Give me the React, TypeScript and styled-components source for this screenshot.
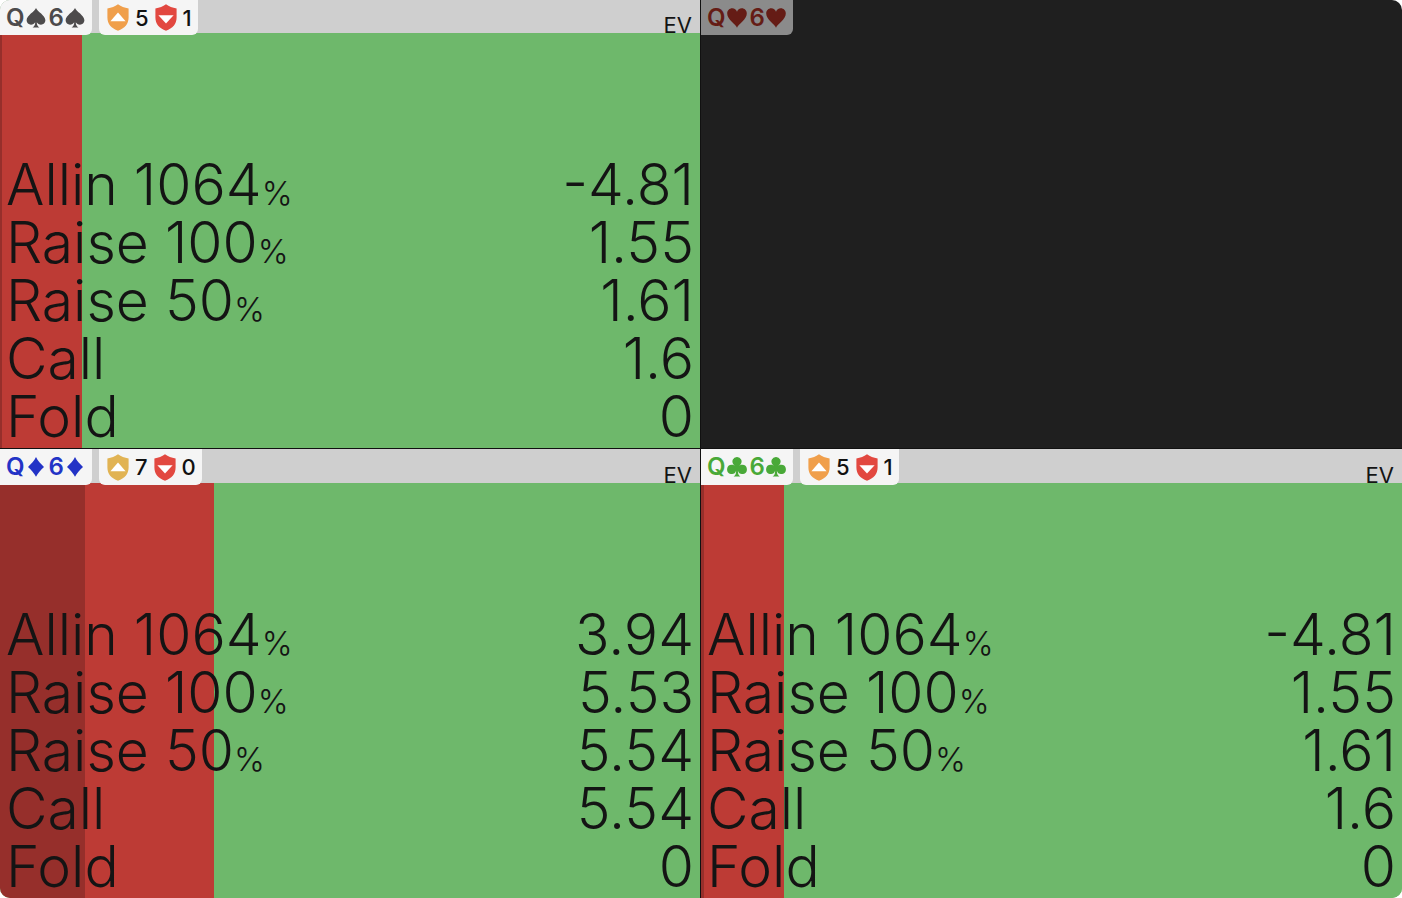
import React from "react";
import styled, { createGlobalStyle, css } from "styled-components";

type Suit = "spade" | "heart" | "diamond" | "club";
type Level = "orange" | "gold";

interface Action {
  name: string;
  percent?: boolean;
  ev: string;
}

interface Combo {
  suit: Suit;
  color: string;
  better?: { count: number; level: Level };
  worse?: number;
  allin?: number;
  raise?: number;
  actions?: Action[];
}

const GlobalStyle = createGlobalStyle`
  * { box-sizing: border-box; }
  body {
    margin: 0;
    background: #ffffff;
    color: #141414;
    font-family: Inter, "Liberation Sans", sans-serif;
  }
`;

const Board = styled.main`
  display: grid;
  grid-template-columns: 1fr 1fr;
  grid-template-rows: 1fr 1fr;
  min-height: 100vh;
  overflow: hidden;
  border-radius: 10px;
`;

const Pane = styled.section<{ $top: boolean; $left: boolean; $empty: boolean }>`
  display: flex;
  flex-direction: column;
  min-width: 0;
  background: ${(p) => (p.$empty ? "#1f1f1f" : "#6eb86b")};
  border-right: ${(p) => (p.$left ? "1px solid #111111" : "0")};
  border-bottom: ${(p) => (p.$top ? "1px solid #111111" : "0")};
`;

const Header = styled.header<{ $top: boolean; $empty: boolean }>`
  display: flex;
  align-items: flex-start;
  gap: 7px;
  height: ${(p) => (p.$top ? 33 : 34)}px;
  padding-right: 8px;
  background: ${(p) => (p.$empty ? "transparent" : "#cfcfcf")};
`;

const chip = css<{ $top: boolean }>`
  position: relative;
  z-index: 1;
  display: flex;
  align-items: center;
  height: ${(p) => (p.$top ? 35 : 36)}px;
  background: #f5f5f5;
`;

const Hand = styled.h2<{ $top: boolean; $color: string; $empty: boolean }>`
  ${chip}
  gap: 1px;
  margin: 0;
  padding: 0 5px 0 6px;
  border-radius: 0 0 6px 0;
  color: ${(p) => p.$color};
  background: ${(p) => (p.$empty ? "#8b8b8b" : "#f5f5f5")};
  font-size: 24px;
  font-weight: 600;
  line-height: 34px;
`;

const Counts = styled.div<{ $top: boolean }>`
  ${chip}
  gap: 6px;
  padding: 0 6px 0 8px;
  border-radius: 0 0 6px 6px;
  color: #111111;
  font-size: 22px;
  font-weight: 500;
  line-height: 34px;
`;

const EvLabel = styled.span`
  align-self: flex-end;
  margin-left: auto;
  font-size: 22px;
  font-weight: 400;
  line-height: 16px;
`;

const Strategy = styled.div<{ $allin: number; $raise: number }>`
  flex: 1;
  display: flex;
  flex-direction: column;
  justify-content: flex-end;
  padding: 0 6px 2px;
  background: linear-gradient(
    to right,
    #962f2b ${(p) => p.$allin}%,
    #bd3b35 ${(p) => p.$allin}% ${(p) => p.$raise}%,
    #6eb86b ${(p) => p.$raise}%
  );
`;

const Actions = styled.table`
  width: 100%;
  border-collapse: collapse;
  font-size: 57px;
  line-height: 58px;
`;

const ActionName = styled.th`
  padding: 0;
  text-align: left;
  font-weight: 300;
`;

const ActionEv = styled.td`
  padding: 0;
  text-align: right;
  font-weight: 300;
`;

const Percent = styled.span`
  font-size: 33px;
  line-height: 33px;
`;

const Icon = styled.svg`
  display: block;
  flex: none;
`;

const SuitMark = styled(Icon)`
  margin-right: 2px;
`;

const SUIT_PATHS: Record<Suit, string> = {
  spade:
    "M10 0C8.8 3.6 0.6 7.3 0.6 12.3C0.6 15 2.7 16.7 5 16.7C6.8 16.7 8.3 15.8 9.2 14.3C9.2 16.7 8.6 18.5 6.6 19.4H13.4C11.4 18.5 10.8 16.7 10.8 14.3C11.7 15.8 13.2 16.7 15 16.7C17.3 16.7 19.4 15 19.4 12.3C19.4 7.3 11.2 3.6 10 0Z",
  heart:
    "M10 19.7C8.6 15.8 0.2 11.6 0.2 5.4C0.2 2.3 2.5 0.2 5.2 0.2C7.6 0.2 9.2 1.7 10 3.7C10.8 1.7 12.4 0.2 14.8 0.2C17.5 0.2 19.8 2.3 19.8 5.4C19.8 11.6 11.4 15.8 10 19.7Z",
  diamond:
    "M10 0C11.7 3.6 14.8 6.9 18 9.9C14.8 12.9 11.7 16.2 10 19.8C8.3 16.2 5.2 12.9 2 9.9C5.2 6.9 8.3 3.6 10 0Z",
  club:
    "M10 0A4.5 4.5 0 0 1 13.5 7.4C13.1 7.9 12.6 8.4 12.1 8.8C12.9 8.3 13.9 7.8 15.2 7.8A4.6 4.6 0 1 1 10.9 13.8C10.9 16.5 11.4 18.4 13.4 19.6H6.6C8.6 18.4 9.1 16.5 9.1 13.8A4.6 4.6 0 1 1 4.8 7.8C6.1 7.8 7.1 8.3 7.9 8.8C7.4 8.4 6.9 7.9 6.5 7.4A4.5 4.5 0 0 1 10 0Z",
};

const SuitIcon = ({ suit }: { suit: Suit }) => (
  <SuitMark width="20" height="20" viewBox="0 0 20 20" fill="currentColor" role="img" aria-label={suit}>
    <path d={SUIT_PATHS[suit]} />
  </SuitMark>
);

const Shield = ({ color, down }: { color: string; down?: boolean }) => (
  <Icon width="22" height="27" viewBox="0 0 22 27" aria-hidden="true">
    <path
      fill={color}
      d="M11 0.3C14.2 2.6 17.4 3.9 21.6 4.4V13.5C21.6 20 17.6 24.5 11 26.7C4.4 24.5 0.4 20 0.4 13.5V4.4C4.6 3.9 7.8 2.6 11 0.3Z"
    />
    <path fill="#ffffff" d={down ? "M3.4 11.2H18.6L11 19.6Z" : "M3.4 17.2H18.6L11 8.6Z"} />
  </Icon>
);

const LEVELS: Record<Level, string> = { orange: "#f09f4b", gold: "#e1b353" };

const actionList = (evs: string[]): Action[] => [
  { name: "Allin 1064", percent: true, ev: evs[0] },
  { name: "Raise 100", percent: true, ev: evs[1] },
  { name: "Raise 50", percent: true, ev: evs[2] },
  { name: "Call", ev: evs[3] },
  { name: "Fold", ev: evs[4] },
];

const COMBOS: Combo[] = [
  {
    suit: "spade",
    color: "#4d4b4c",
    better: { count: 5, level: "orange" },
    worse: 1,
    allin: 0.3,
    raise: 11.7,
    actions: actionList(["-4.81", "1.55", "1.61", "1.6", "0"]),
  },
  { suit: "heart", color: "#651c15" },
  {
    suit: "diamond",
    color: "#2333c6",
    better: { count: 7, level: "gold" },
    worse: 0,
    allin: 12.15,
    raise: 30.57,
    actions: actionList(["3.94", "5.53", "5.54", "5.54", "0"]),
  },
  {
    suit: "club",
    color: "#49a938",
    better: { count: 5, level: "orange" },
    worse: 1,
    allin: 0.4,
    raise: 11.85,
    actions: actionList(["-4.81", "1.55", "1.61", "1.6", "0"]),
  },
];

const ComboPane = ({ combo, index }: { combo: Combo; index: number }) => {
  const top = index < 2;
  const empty = !combo.actions;
  return (
    <Pane $top={top} $left={index % 2 === 0} $empty={empty}>
      <Header $top={top} $empty={empty}>
        <Hand $top={top} $color={combo.color} $empty={empty}>
          <span>Q</span>
          <SuitIcon suit={combo.suit} />
          <span>6</span>
          <SuitIcon suit={combo.suit} />
        </Hand>
        {combo.better && (
          <Counts $top={top}>
            <Shield color={LEVELS[combo.better.level]} />
            <span>{combo.better.count}</span>
            <Shield color="#e24840" down />
            <span>{combo.worse}</span>
          </Counts>
        )}
        {!empty && <EvLabel>EV</EvLabel>}
      </Header>
      {combo.actions && (
        <Strategy $allin={combo.allin ?? 0} $raise={combo.raise ?? 0}>
          <Actions>
            <tbody>
              {combo.actions.map((action) => (
                <tr key={action.name}>
                  <ActionName scope="row">
                    {action.name}
                    {action.percent && <Percent>%</Percent>}
                  </ActionName>
                  <ActionEv>{action.ev}</ActionEv>
                </tr>
              ))}
            </tbody>
          </Actions>
        </Strategy>
      )}
    </Pane>
  );
};

export default function App() {
  return (
    <>
      <GlobalStyle />
      <Board>
        {COMBOS.map((combo, index) => (
          <ComboPane key={combo.suit} combo={combo} index={index} />
        ))}
      </Board>
    </>
  );
}
